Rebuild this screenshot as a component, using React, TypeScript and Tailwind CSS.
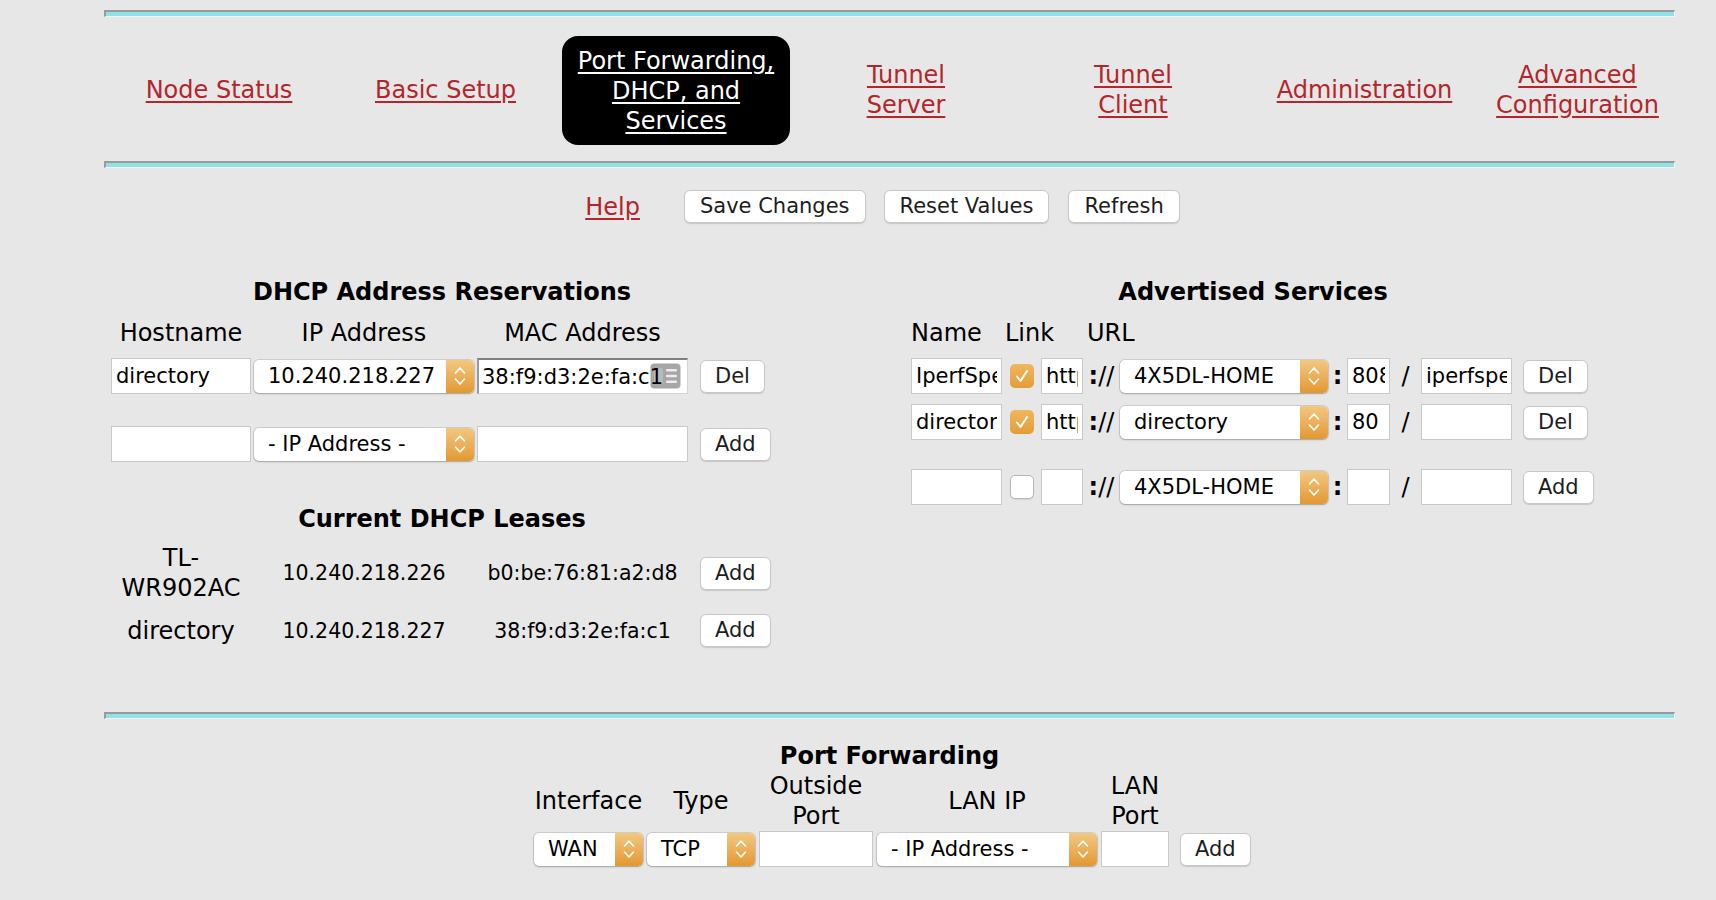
import React from 'react';

const linkCls = 'text-[#b3262b] underline underline-offset-[3px]';

function Rule() {
  return (
    <div className="h-[7px] border-t-2 border-l-2 border-r border-b border-t-[#9a9a9a] border-l-[#9a9a9a] border-r-[#f3f3f3] border-b-[#f3f3f3] bg-[#8fe3e6]" />
  );
}

function Btn({ children, className = '' }: { children: React.ReactNode; className?: string }) {
  return (
    <button className={`h-[33px] rounded-[6px] border border-[#c8c8c8] bg-white px-[14px] text-[21px] leading-none text-[#1d1d1d] shadow-[0_1px_1px_rgba(0,0,0,0.14)] ${className}`}>
      {children}
    </button>
  );
}

function Field({ value = '', className = '', bg = 'bg-white' }: { value?: string; className?: string; bg?: string }) {
  return (
    <input
      readOnly
      value={value}
      className={`h-[36px] border border-[#c9c9c9] px-[4px] text-[21px] text-black outline-none ${bg} ${className}`}
    />
  );
}

function Chevrons() {
  return (
    <svg width="14" height="26" viewBox="0 0 14 26" fill="none" stroke="white" strokeWidth="1.6" strokeLinecap="round" strokeLinejoin="round">
      <polyline points="2.5,10 7,5 11.5,10" />
      <polyline points="2.5,16 7,21 11.5,16" />
    </svg>
  );
}

function Select({ value, className = '' }: { value: string; className?: string }) {
  return (
    <div className={`flex h-[33px] items-stretch rounded-[5px] bg-white shadow-[0_0_0_1px_rgba(0,0,0,0.1),0_1px_2px_rgba(0,0,0,0.22)] ${className}`}>
      <span className="flex flex-1 items-center overflow-hidden whitespace-nowrap pl-[14px] text-[21px] text-black">{value}</span>
      <span className="flex w-[28px] items-center justify-center rounded-r-[5px] bg-linear-to-b from-[#f2c87f] to-[#e3982f]">
        <Chevrons />
      </span>
    </div>
  );
}

function Check({ on }: { on: boolean }) {
  if (!on) {
    return <span className="block h-[24px] w-[24px] rounded-[5px] border border-[#b5b5b5] bg-white shadow-[0_1px_1px_rgba(0,0,0,0.08)]" />;
  }
  return (
    <span className="flex h-[24px] w-[24px] items-center justify-center rounded-[5px] bg-linear-to-b from-[#f0b65f] to-[#e39d36]">
      <svg width="16" height="16" viewBox="0 0 16 16" fill="none" stroke="white" strokeWidth="2" strokeLinecap="round" strokeLinejoin="round">
        <polyline points="3,8.5 6.5,13 13,3" />
      </svg>
    </span>
  );
}

function AutofillIcon() {
  return (
    <svg width="31" height="26" viewBox="0 0 31 26" className="absolute right-[7px] top-[5px]">
      <rect x="0.5" y="0.5" width="30" height="25" rx="4" fill="#a6a6a6" />
      <rect x="4" y="5" width="9" height="16" rx="2" fill="#b9b9b9" />
      <rect x="16" y="6" width="11" height="2.4" rx="1" fill="#ececec" />
      <rect x="16" y="11.8" width="11" height="2.4" rx="1" fill="#ececec" />
      <rect x="16" y="17.6" width="11" height="2.4" rx="1" fill="#ececec" />
    </svg>
  );
}

const navItems = [
  { w: 'w-[230px]', label: <>Node Status</> },
  { w: 'w-[223px]', label: <>Basic Setup</> },
  { w: 'w-[238px]', active: true, label: <>Port Forwarding,<br />DHCP, and<br />Services</> },
  { w: 'w-[222px]', label: <>Tunnel<br />Server</> },
  { w: 'w-[232px]', label: <>Tunnel<br />Client</> },
  { w: 'w-[231px]', label: <>Administration</> },
  { w: 'w-[195px]', label: <>Advanced<br />Configuration</> },
];

const dhcpGrid = 'grid grid-cols-[140px_220px_211px_82px] gap-x-[3px] items-center';
const pfGrid = 'grid grid-cols-[109px_108px_114px_220px_68px_77px] gap-x-[4px] items-center';

export default function App() {
  return (
    <div className="min-h-screen bg-[#e7e7e7] pt-[10px] font-['DejaVu_Sans',sans-serif] text-[24px] leading-[30px] text-black">
      <div className="ml-[104px] w-[1571px]">
        <Rule />

        <nav className="flex h-[144px] items-center pt-[2px]">
          {navItems.map((item, i) => (
            <div key={i} className={`flex justify-center text-center ${item.w}`}>
              {item.active ? (
                <div className="flex h-[109px] w-[228px] items-center justify-center rounded-[16px] bg-black pt-[2px]">
                  <a className="text-white underline underline-offset-[3px]">{item.label}</a>
                </div>
              ) : (
                <a className={linkCls}>{item.label}</a>
              )}
            </div>
          ))}
        </nav>

        <Rule />

        <div className="mt-[22px] flex h-[33px] items-center justify-center pr-[14px]">
          <a className={`${linkCls} mr-[44px]`}>Help</a>
          <Btn className="mr-[18px] px-[15px]">Save Changes</Btn>
          <Btn className="mr-[19px] px-[15px]">Reset Values</Btn>
          <Btn className="px-[15px]">Refresh</Btn>
        </div>

        <div className="mt-[54px] flex">
          {/* DHCP reservations + leases */}
          <div className="w-[674px] pl-[7px]">
            <div className="w-[662px]">
              <h3 className="text-center font-bold">DHCP Address Reservations</h3>
              <div className={`${dhcpGrid} mt-[11px] text-center`}>
                <span>Hostname</span>
                <span>IP Address</span>
                <span>MAC Address</span>
                <span />
              </div>
              <div className={`${dhcpGrid} mt-[10px]`}>
                <Field value="directory" className="w-[140px]" />
                <Select value="10.240.218.227" className="w-[220px]" />
                <div className="relative w-[211px] bg-white">
                  <AutofillIcon />
                  <Field
                    value="38:f9:d3:2e:fa:c1"
                    bg="bg-transparent"
                    className="relative w-[211px] border-t-2 border-l-2 border-t-[#7f7f7f] border-l-[#9a9a9a] border-r-[#d4d4d4] border-b-[#d4d4d4] pl-[3px]"
                  />
                </div>
                <div><Btn className="ml-[9px]">Del</Btn></div>
              </div>
              <div className={`${dhcpGrid} mt-[32px]`}>
                <Field className="w-[140px]" />
                <Select value="- IP Address -" className="w-[220px]" />
                <Field className="w-[211px]" />
                <div><Btn className="ml-[9px]">Add</Btn></div>
              </div>

              <h3 className="mt-[42px] text-center font-bold">Current DHCP Leases</h3>
              <div className={`${dhcpGrid} mt-[9px] text-center`}>
                <span>TL-<br />WR902AC</span>
                <span className="text-[20.5px]">10.240.218.226</span>
                <span className="text-[20.5px]">b0:be:76:81:a2:d8</span>
                <div className="text-left"><Btn className="ml-[9px]">Add</Btn></div>
              </div>
              <div className={`${dhcpGrid} mt-[11px] text-center`}>
                <span>directory</span>
                <span className="text-[20.5px]">10.240.218.227</span>
                <span className="text-[20.5px]">38:f9:d3:2e:fa:c1</span>
                <div className="text-left"><Btn className="ml-[9px]">Add</Btn></div>
              </div>
            </div>
          </div>

          {/* Advertised services */}
          <div className="pl-[133px]">
            <div className="w-[684px]">
              <h3 className="text-center font-bold">Advertised Services</h3>
              <div className="mt-[11px] flex">
                <span className="w-[94px]">Name</span>
                <span className="w-[82px]">Link</span>
                <span>URL</span>
              </div>
              {[
                { name: 'IperfSpeed', on: true, host: '4X5DL-HOME', port: '8080', path: 'iperfspeed', btn: 'Del', mt: 'mt-[10px]' },
                { name: 'directory', on: true, host: 'directory', port: '80', path: '', btn: 'Del', mt: 'mt-[10px]' },
                { name: '', on: false, host: '4X5DL-HOME', port: '', path: '', btn: 'Add', mt: 'mt-[29px]' },
              ].map((r, i) => (
                <div key={i} className={`flex h-[36px] items-center ${r.mt}`}>
                  <Field value={r.name} className="w-[91px]" />
                  <div className="flex w-[39px] justify-center"><Check on={r.on} /></div>
                  <Field value={r.name ? 'http' : ''} className="w-[42px]" />
                  <span className="w-[37px] text-center"><b>:</b>//</span>
                  <Select value={r.host} className="w-[208px]" />
                  <span className="w-[19px] text-center font-bold">:</span>
                  <Field value={r.port} className="w-[43px]" />
                  <span className="w-[31px] text-center">/</span>
                  <Field value={r.path} className="w-[91px]" />
                  <div className="w-[83px] pl-[11px]"><Btn>{r.btn}</Btn></div>
                </div>
              ))}
            </div>
          </div>
        </div>

        <div className="mt-[65px]">
          <Rule />
        </div>

        <h3 className="mt-[22px] text-center font-bold">Port Forwarding</h3>
        <div className="ml-[430px] w-[716px]">
          <div className={`${pfGrid} h-[60px] text-center`}>
            <span>Interface</span>
            <span>Type</span>
            <span>Outside<br />Port</span>
            <span>LAN IP</span>
            <span>LAN<br />Port</span>
            <span />
          </div>
          <div className={pfGrid}>
            <Select value="WAN" className="w-[109px]" />
            <Select value="TCP" className="w-[108px]" />
            <Field className="h-[34px] w-[114px]" />
            <Select value="- IP Address -" className="w-[220px]" />
            <Field className="h-[34px] w-[68px]" />
            <div><Btn className="ml-[7px]">Add</Btn></div>
          </div>
        </div>
      </div>
    </div>
  );
}
